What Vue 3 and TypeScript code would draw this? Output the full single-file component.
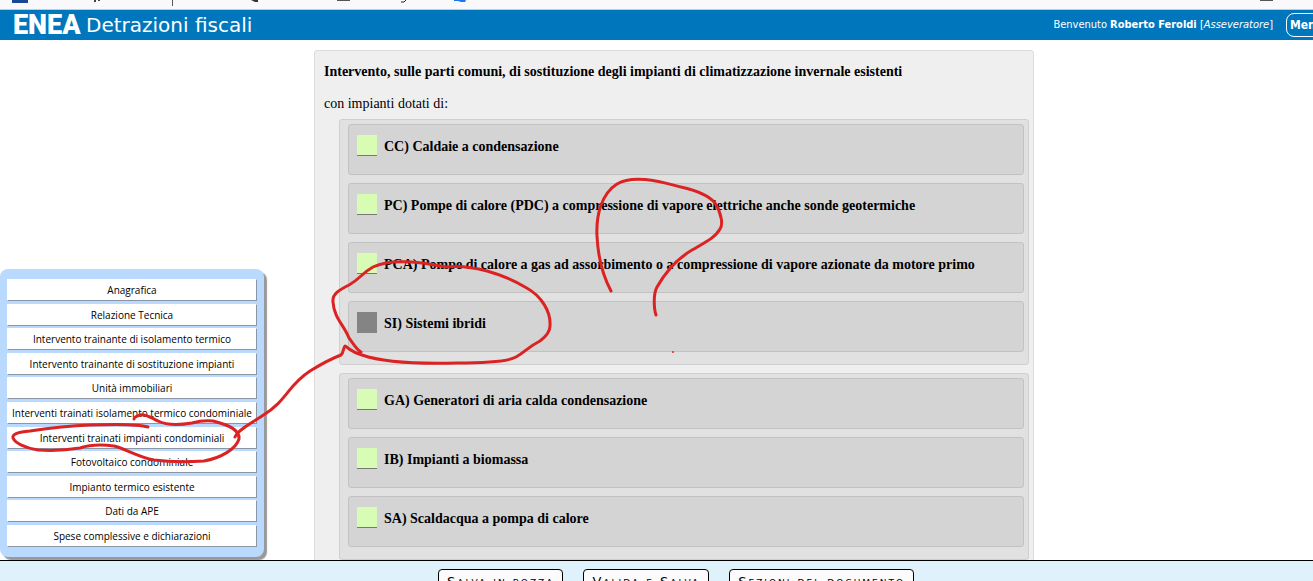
<script setup lang="ts">
import { ref } from 'vue'

interface Option {
  code: string
  label: string
  locked?: boolean
}

const sections: string[] = [
  'Anagrafica',
  'Relazione Tecnica',
  'Intervento trainante di isolamento termico',
  'Intervento trainante di sostituzione impianti',
  'Unità immobiliari',
  'Interventi trainati isolamento termico condominiale',
  'Interventi trainati impianti condominiali',
  'Fotovoltaico condominiale',
  'Impianto termico esistente',
  'Dati da APE',
  'Spese complessive e dichiarazioni',
]

const groups: Option[][] = [
  [
    { code: 'CC', label: 'Caldaie a condensazione' },
    { code: 'PC', label: 'Pompe di calore (PDC) a compressione di vapore elettriche anche sonde geotermiche' },
    { code: 'PCA', label: 'Pompe di calore a gas ad assorbimento o a compressione di vapore azionate da motore primo' },
    { code: 'SI', label: 'Sistemi ibridi', locked: true },
  ],
  [
    { code: 'GA', label: 'Generatori di aria calda condensazione' },
    { code: 'IB', label: 'Impianti a biomassa' },
    { code: 'SA', label: 'Scaldacqua a pompa di calore' },
  ],
]

const actions: string[] = ['Salva in bozza', 'Valida e Salva', 'Sezioni del documento']

const selected = ref<string[]>([])
</script>

<template>
  <div class="page">
    <div class="strip">
      <svg class="strip-marks" aria-hidden="true">
        <rect x="12" y="0" width="16" height="3" fill="#164a94" />
        <path d="M95 0v2M99 0v1" stroke="#444" stroke-width="2" />
        <path d="M172.500 0v6" stroke="#555" />
        <path d="M251 0l4 2h3V0z" fill="#333" />
        <rect x="337" y="0" width="13" height="1" fill="#555" />
        <path d="M401 2h3l2-2" stroke="#222" fill="none" />
        <path d="M454 0h12l-1 2-4 0-3-1h-4z" fill="#1877f2" />
        <rect x="1260" y="0" width="13" height="1" fill="#555" />
      </svg>
    </div>

    <header class="topbar">
      <span class="logo">ENEA</span>
      <h1 class="app-name">Detrazioni fiscali</h1>
      <p class="user">Benvenuto <strong>Roberto Feroldi</strong> [<em>Asseveratore</em>]</p>
      <div class="menu-slot">
        <button type="button" class="menu">Menu</button>
      </div>
    </header>

    <main class="body">
      <nav class="side">
        <button v-for="s in sections" :key="s" type="button" class="side-item">{{ s }}</button>
      </nav>

      <section class="panel">
        <h2 class="title">Intervento, sulle parti comuni, di sostituzione degli impianti di climatizzazione invernale esistenti</h2>
        <p class="lead">con impianti dotati di:</p>
        <div v-for="(g, i) in groups" :key="i" class="group">
          <div v-for="o in g" :key="o.code" class="option">
            <input :id="'opt-' + o.code" v-model="selected" type="checkbox" class="tick" :value="o.code" :disabled="o.locked" />
            <label :for="'opt-' + o.code">{{ o.code }}) {{ o.label }}</label>
          </div>
        </div>
      </section>
    </main>

    <footer class="actions">
      <button v-for="a in actions" :key="a" type="button" class="action">{{ a }}</button>
    </footer>

    <svg class="ink" aria-hidden="true">
      <path d="M148 427C138 424 115 424 90 425C65 426 50 428 30 431C18 432 12 434 13 438C15 443 25 448 38 450C52 451 68 450 80 448C92 444 106 445 114 446C126 449 138 457 154 460C170 462 187 462 204 461C221 458 236 449 239 439C240 430 229 425 213 421C204 420 199 421 192 423C180 425 166 425 158 421C151 418 145 413 140 415C137 416 134 417 134 419" />
      <path d="M235 437C238 430 250 424 262 416C288 400 287 386 310 371C323 363 333 358 341 355C344 352 343 348 345 346C350 349 353 353 362 355C382 362 420 364 457 363C486 363 507 362 516 357C525 352 528 347 540 341C548 335 550 331 550 326C551 312 542 296 525 287C503 274 472 264 446 267C420 262 392 258 373 267C362 273 360 279 349 285C339 290 332 294 333 302C334 318 344 325 349 338C353 343 356 349 361 352" />
      <path d="M611 291C603 276 598 257 597 236C596 216 601 194 617 184C634 174 661 182 681 187C699 191 710 197 715 203C722 214 723 225 720 229C715 238 704 243 692 250C675 260 665 273 657 287C653 294 654 309 656 315" />
      <circle cx="673" cy="352" r="1" />
    </svg>
  </div>
</template>

<style>
body {
  margin: 0;
}
</style>

<style scoped>
.page {
  position: relative;
  display: flex;
  flex-direction: column;
  height: 100vh;
  overflow: hidden;
  background: #fff;
  color: #000;
  font-family: "Liberation Serif", serif;
}

.strip {
  flex: none;
  height: 9px;
  background: #f9f9fb;
  border-bottom: 1px solid #c4cbd2;
}

.strip-marks {
  display: block;
  width: 100%;
  height: 9px;
}

.topbar {
  flex: none;
  display: flex;
  align-items: center;
  height: 30px;
  padding-left: 13px;
  overflow: hidden;
  background: #0077bd;
  color: #fff;
  white-space: nowrap;
}

.logo {
  width: 73px;
  font: 900 27px/28px Roboto, sans-serif;
}

.app-name {
  margin: 0;
  font: 400 20px/28px "DejaVu Sans", sans-serif;
}

.user {
  margin: 0 13px 0 auto;
  font: 11px/28px "DejaVu Sans Condensed", "DejaVu Sans", sans-serif;
}

.menu-slot {
  flex: none;
  width: 27px;
}

.menu {
  height: 24px;
  padding: 0 3px;
  border: 1px solid #fff;
  border-radius: 8px;
  background: #0077bd;
  color: #fff;
  font: 700 12px/20px "DejaVu Sans Condensed", "DejaVu Sans", sans-serif;
}

.body {
  flex: 1;
  min-height: 0;
  display: grid;
  grid-template-columns: 314px minmax(0, 720px) 1fr;
  grid-template-rows: 100%;
  overflow: hidden;
}

.side {
  align-self: end;
  display: flex;
  flex-direction: column;
  justify-content: space-between;
  box-sizing: border-box;
  width: 264px;
  height: 288px;
  margin-bottom: 3px;
  padding: 10px 7px;
  border-radius: 8px;
  background: #b9d9ff;
  box-shadow: 3px 3px 1px #999;
}

.side-item {
  box-sizing: border-box;
  height: 22px;
  padding: 0;
  border: 1px solid #fff;
  border-right-color: #8b95a3;
  border-bottom-color: #8b95a3;
  background: #fff;
  color: #000;
  font: 10px/20px "Open Sans", sans-serif;
  white-space: nowrap;
}

.panel {
  align-self: start;
  box-sizing: border-box;
  margin-top: 10px;
  padding: 11px 4px 10px 9px;
  border: 1px solid #dcdcdc;
  border-radius: 3px;
  background: #efefef;
}

.title,
.lead {
  margin: 0 0 12px;
  font-size: 14px;
  line-height: 20px;
}

.lead {
  margin-bottom: 5px;
}

.group {
  margin: 0 0 8px 15px;
  padding: 4px 4px 12px 8px;
  border: 1px solid #cfcfcf;
  border-radius: 3px;
  background: #e1e1e1;
}

.option {
  display: flex;
  align-items: flex-start;
  gap: 7px;
  box-sizing: border-box;
  height: 51px;
  padding: 10px 8px;
  border: 1px solid #c2c2c2;
  border-radius: 3px;
  background: #d4d4d4;
  font-size: 14px;
  font-weight: 700;
  line-height: 24px;
}

.option + .option {
  margin-top: 8px;
}

.tick {
  flex: none;
  appearance: none;
  box-sizing: border-box;
  width: 20px;
  height: 21px;
  margin: 0;
  border-bottom: 1px solid #777;
  background: #d9fcb5;
}

.tick:checked {
  background: #7fbf4a;
}

.tick:disabled {
  border-color: #848484;
  background: #848484;
}

.actions {
  flex: none;
  display: flex;
  align-items: flex-start;
  gap: 20px;
  box-sizing: border-box;
  height: 21px;
  padding: 8px 0 0 438px;
  overflow: hidden;
  border-top: 1px solid #000;
  background: #dff1fb;
}

.action {
  flex: none;
  height: 26px;
  padding: 0 8px;
  border: 1px solid #000;
  border-radius: 4px;
  background: #fbfbfb;
  color: #000;
  font: 13px/20px "DejaVu Sans", sans-serif;
  font-variant: small-caps;
  letter-spacing: 2px;
  white-space: nowrap;
}

.ink {
  position: absolute;
  inset: 0;
  width: 100%;
  height: 100%;
  pointer-events: none;
  fill: none;
  stroke: #dc2323;
  stroke-width: 3;
  stroke-linecap: round;
  stroke-linejoin: round;
}

.ink circle {
  fill: #dc2323;
  stroke: none;
}
</style>
